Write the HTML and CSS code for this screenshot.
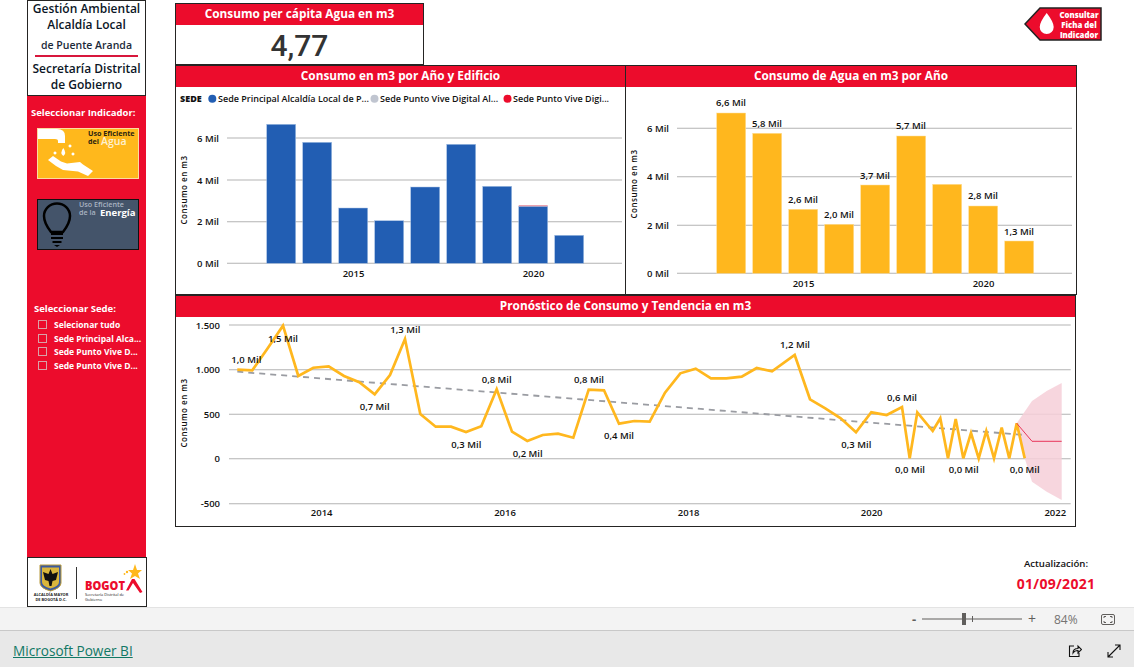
FILE: index.html
```html
<!DOCTYPE html>
<html lang="es">
<head>
<meta charset="utf-8">
<title>Gestión Ambiental</title>
<link rel="stylesheet" href="styles.css">
</head>
<body>
<div class="report">
  <aside class="sidebar">
    <div class="brand">
      <div class="brand-line">Gestión Ambiental</div>
      <div class="brand-line">Alcaldía Local</div>
      <div class="brand-sub">de Puente Aranda</div>
      <div class="brand-rule"></div>
      <div class="brand-line">Secretaría Distrital</div>
      <div class="brand-line">de Gobierno</div>
    </div>
    <div class="side-panel">
      <div class="side-title">Seleccionar Indicador:</div>
      <svg class="tile tile-water" viewBox="0 0 102 51" width="102" height="51">
        <rect x="0.5" y="0.5" width="101" height="50" fill="#ffb81c" stroke="#fbdca0"/>
        <path d="M1 1H20Q28 1 28 8V15H21V13Q21 11 18 11H1Z" fill="#fff"/>
        <path d="M26.300 20Q30 25 26.300 28Q22.500 25 26.300 20ZM18 23.500a1.500 1.500 0 1 0 .01 0M33 16.500a1.500 1.500 0 1 0 .01 0M36 24.500a1.500 1.500 0 1 0 .01 0" fill="#fff"/>
        <path d="M11 32L16 28L24 33.500L30 35.500L43 34L46 36.500L56 43L51 48L41 43.500L26 42L19 38Z" fill="#fff"/>
        <text class="tile-text tile-dark" x="51" y="8">Uso Eficiente</text>
        <text class="tile-text tile-dark" x="51" y="16">del</text>
        <text class="tile-big tile-light" x="64" y="17">Agua</text>
      </svg>
      <svg class="tile tile-energy" viewBox="0 0 102 51" width="102" height="51">
        <rect x="0.5" y="0.5" width="101" height="50" fill="#44546a" stroke="#111"/>
        <path d="M14 33Q7 24 7 17A13 12.500 0 0 1 33 17Q33 24 26 33Z" fill="none" stroke="#000" stroke-width="2.500"/>
        <path d="M14 35H26M14 39H26M15.500 43H24.500" stroke="#000" stroke-width="2.200"/>
        <path d="M17 46H23L20 48Z" fill="#000"/>
        <text class="tile-text tile-grey" x="42" y="8">Uso Eficiente</text>
        <text class="tile-text tile-grey" x="42" y="16">de la</text>
        <text class="tile-big tile-light" x="63" y="17">Energía</text>
      </svg>
      <div class="side-title side-title-sede">Seleccionar Sede:</div>
      <ul class="slicer">
        <li class="slicer-row"><span class="check"></span><span class="slicer-label">Selecionar tudo</span></li>
        <li class="slicer-row"><span class="check"></span><span class="slicer-label">Sede Principal Alca...</span></li>
        <li class="slicer-row"><span class="check"></span><span class="slicer-label">Sede Punto Vive D...</span></li>
        <li class="slicer-row"><span class="check"></span><span class="slicer-label">Sede Punto Vive D...</span></li>
      </ul>
    </div>
    <div class="logo-box">
      <svg viewBox="0 0 118 48" width="118" height="48">
        <path d="M12 7H33V25Q33 30 22.500 33Q12 30 12 25Z" fill="#3b5aa0" stroke="#b89a3a"/>
        <path d="M14 9.500H31V24Q31 28 22.500 30.500Q14 28 14 24Z" fill="#d9b63c"/>
        <path d="M22.500 11L24.500 16L30 14L28 22L24.500 23L23.500 28H21.500L20.500 23L17 22L15 14L20.500 16Z" fill="#111"/>
        <text class="logo-mini" x="23" y="38">ALCALDÍA MAYOR</text>
        <text class="logo-mini" x="23" y="43">DE BOGOTÁ D.C.</text>
        <rect x="48" y="9" width="1" height="32" fill="#333"/>
        <text class="logo-word" x="57" y="32" textLength="40" lengthAdjust="spacingAndGlyphs">BOGOT</text>
        <path d="M98 32.500L104 21H106.500L114.500 34L112 35L105 25L100.500 32.500Z" fill="#ec0c2c"/>
        <path d="M107 6L109 12L114 12L110 15.500L112 21L107 18L102 21L104 15.500L100 12L105 12Z" fill="#ffb81c"/>
        <circle cx="99" cy="14" r="1.200" fill="#ffb81c"/><circle cx="96.500" cy="16" r="0.900" fill="#ffb81c"/>
        <text class="logo-mini logo-left" x="57" y="38">Secretaría Distrital de</text>
        <text class="logo-mini logo-left" x="57" y="43">Gobierno</text>
      </svg>
    </div>
  </aside>

  <main class="main">
    <div class="top-row">
      <section class="kpi">
        <h2 class="head head-kpi">Consumo per cápita Agua en m3</h2>
        <div class="kpi-value">4,77</div>
      </section>
      <svg class="fiche" viewBox="0 0 78 34" width="78" height="34">
        <path d="M1 17L16 1H77V33H16Z" fill="#ec0c2c" stroke="#222" stroke-width="1.500"/>
        <path d="M22.700 6Q29.700 15 29.700 20A7 7 0 0 1 15.700 20Q15.700 15 22.700 6Z" fill="#fff"/>
        <text class="fiche-text" x="55" y="10.500">Consultar</text>
        <text class="fiche-text" x="55" y="20.500">Ficha del</text>
        <text class="fiche-text" x="55" y="30.500">Indicador</text>
      </svg>
    </div>

    <div class="charts">
      <section class="panel">
        <h2 class="head">Consumo en m3 por Año y Edificio</h2>
        <svg class="plot" viewBox="176 87 449 208" width="449" height="208">
          <text class="legend-name" x="180" y="102">SEDE</text>
          <circle cx="212.300" cy="98.700" r="4" fill="#225eb3"/>
          <text class="label legend-left" x="218" y="102">Sede Principal Alcaldía Local de P...</text>
          <circle cx="374.500" cy="98.700" r="4" fill="#c0c5d0"/>
          <text class="label legend-left" x="380" y="102">Sede Punto Vive Digital Al...</text>
          <circle cx="507.500" cy="98.700" r="4" fill="#ec0c2c"/>
          <text class="label legend-left" x="513" y="102">Sede Punto Vive Digi...</text>

          <path class="grid" d="M227 138H622M227 180H622M227 221.700H622M227 263.300H622"/>
          <g class="axis-y">
            <text class="label end" x="219" y="141.500">6 Mil</text>
            <text class="label end" x="219" y="183.500">4 Mil</text>
            <text class="label end" x="219" y="225">2 Mil</text>
            <text class="label end" x="219" y="266.500">0 Mil</text>
          </g>
          <text class="label axis-title" transform="translate(187 190) rotate(-90)">Consumo en m3</text>
          <g class="bars-blue">
            <rect x="266.700" y="124.300" width="29" height="139"/>
            <rect x="302.700" y="142.300" width="29" height="121"/>
            <rect x="338.700" y="208" width="29" height="55.300"/>
            <rect x="374.700" y="220.700" width="29" height="42.600"/>
            <rect x="410.700" y="187" width="29" height="76.300"/>
            <rect x="446.700" y="144.300" width="29" height="119"/>
            <rect x="482.700" y="186.300" width="29" height="77"/>
            <rect x="518.700" y="206.300" width="29" height="57"/>
            <rect x="554.700" y="235.300" width="29" height="28"/>
          </g>
          <rect x="518.700" y="205.200" width="29" height="1.100" fill="#e58c9c"/>
          <text class="label mid" x="353.500" y="276.500">2015</text>
          <text class="label mid" x="533.500" y="276.500">2020</text>
        </svg>
      </section>

      <section class="panel panel-right">
        <h2 class="head">Consumo de Agua en m3 por Año</h2>
        <svg class="plot" viewBox="626 87 449 208" width="449" height="208">
          <path class="grid" d="M677 128.300H1072M677 176.700H1072M677 225.300H1072M677 273.300H1072"/>
          <text class="label end" x="669" y="131.800">6 Mil</text>
          <text class="label end" x="669" y="180.200">4 Mil</text>
          <text class="label end" x="669" y="228.800">2 Mil</text>
          <text class="label end" x="669" y="276.800">0 Mil</text>
          <text class="label axis-title" transform="translate(637 184) rotate(-90)">Consumo en m3</text>
          <g class="bars-yellow">
            <rect x="716.700" y="113" width="29" height="160.300"/>
            <rect x="752.700" y="133.300" width="29" height="140"/>
            <rect x="788.700" y="209.300" width="29" height="64"/>
            <rect x="824.700" y="224.300" width="29" height="49"/>
            <rect x="860.700" y="185" width="29" height="88.300"/>
            <rect x="896.700" y="136" width="29" height="137.300"/>
            <rect x="932.700" y="184.300" width="29" height="89"/>
            <rect x="968.700" y="206" width="29" height="67.300"/>
            <rect x="1004.700" y="241" width="29" height="32.300"/>
          </g>
          <text class="label mid" x="731" y="106">6,6 Mil</text>
          <text class="label mid" x="767" y="127">5,8 Mil</text>
          <text class="label mid" x="803" y="203">2,6 Mil</text>
          <text class="label mid" x="839" y="218">2,0 Mil</text>
          <text class="label mid" x="875" y="178.500">3,7 Mil</text>
          <text class="label mid" x="911" y="129">5,7 Mil</text>
          <text class="label mid" x="983" y="199">2,8 Mil</text>
          <text class="label mid" x="1019" y="235">1,3 Mil</text>
          <text class="label mid" x="803.500" y="286.500">2015</text>
          <text class="label mid" x="983.500" y="286.500">2020</text>
        </svg>
      </section>
    </div>

    <section class="panel panel-wide">
      <h2 class="head">Pronóstico de Consumo y Tendencia en m3</h2>
      <svg class="plot" viewBox="176 317 899 209" width="899" height="209">
        <path class="grid" d="M229 325H1070.700M229 369.700H1070.700M229 414.300H1070.700M229 458.700H1070.700M229 503.700H1070.700"/>
        <text class="label end" x="220" y="328.500">1.500</text>
        <text class="label end" x="220" y="373.200">1.000</text>
        <text class="label end" x="220" y="417.800">500</text>
        <text class="label end" x="220" y="462.200">0</text>
        <text class="label end" x="220" y="507.200">-500</text>
        <text class="label axis-title" transform="translate(187 413) rotate(-90)">Consumo en m3</text>
        <polygon class="band" points="1016.700,423.300 1032,401 1046.700,391 1061.700,383 1061.700,500 1046.700,491.700 1032,481.700 1024.700,458.300"/>
        <polyline class="trend" points="237.300,371.700 1024.700,435"/>
        <polyline class="series" points="237.300,369.700 252.300,370.300 267.700,348.300 283,325.700 298.300,376 313.300,367.700 328.700,366.300 344,376 359.300,382.300 374.700,394.300 390,375 405,339 420.300,414 435.700,426.700 451,426.700 466,432 481.300,426.300 496.700,389.300 512,431.700 527.300,441 542.700,435 558,433.700 573.300,437.700 588.700,389.700 604,390.300 619,423.700 634.300,421 649.700,421.700 665,392.700 680.300,373.300 695.700,368.700 711,378.300 726.300,378.300 741.700,376.700 756.700,368 772,371.300 794.700,355 810,399.300 825.300,408.300 840.700,418.300 856,432.300 871.300,412.300 886.700,415 902,407 909.700,458.300 917.300,412.300 932.700,431 940.300,418.300 948,458.300 955.700,419 963.300,458.300 971,433 978.700,458.300 986.300,431 994,458.300 1001.700,427.700 1009.300,458.300 1016.700,423.300 1024.700,458.300"/>
        <polyline class="forecast" points="1016.700,423.300 1032,441.300 1061.700,441.300"/>
        <text class="label mid" x="246.300" y="362.700">1,0 Mil</text>
        <text class="label mid" x="283" y="342">1,5 Mil</text>
        <text class="label mid" x="405.300" y="332.700">1,3 Mil</text>
        <text class="label mid" x="374.700" y="410">0,7 Mil</text>
        <text class="label mid" x="466.300" y="447.700">0,3 Mil</text>
        <text class="label mid" x="496.700" y="382.700">0,8 Mil</text>
        <text class="label mid" x="527.700" y="456.700">0,2 Mil</text>
        <text class="label mid" x="589" y="382.700">0,8 Mil</text>
        <text class="label mid" x="619" y="438.700">0,4 Mil</text>
        <text class="label mid" x="795" y="347.700">1,2 Mil</text>
        <text class="label mid" x="856.300" y="447.700">0,3 Mil</text>
        <text class="label mid" x="902" y="400.700">0,6 Mil</text>
        <text class="label mid" x="910" y="473.300">0,0 Mil</text>
        <text class="label mid" x="963.700" y="473.300">0,0 Mil</text>
        <text class="label mid" x="1024.700" y="472.700">0,0 Mil</text>
        <text class="label mid" x="321.700" y="515.700">2014</text>
        <text class="label mid" x="505" y="515.700">2016</text>
        <text class="label mid" x="688.700" y="515.700">2018</text>
        <text class="label mid" x="871.700" y="515.700">2020</text>
        <text class="label mid" x="1055.300" y="515.700">2022</text>
      </svg>
    </section>

    <div class="update">
      <div class="update-label">Actualización:</div>
      <div class="update-date">01/09/2021</div>
    </div>
  </main>
</div>

<div class="statusbar">
  <span class="zoom-sign">-</span>
  <svg class="zoom-slider" viewBox="0 0 100 12" width="100" height="12">
    <rect x="0" y="5.500" width="100" height="1" fill="#605e5c"/>
    <rect x="50" y="3" width="1" height="6" fill="#605e5c"/>
    <rect x="40" y="0" width="4" height="12" fill="#605e5c"/>
  </svg>
  <span class="zoom-sign zoom-plus">+</span>
  <span class="zoom-pct">84%</span>
  <svg class="fit" viewBox="0 0 14 11" width="14" height="11">
    <rect x="0.500" y="0.500" width="13" height="10" rx="1.500" fill="none" stroke="#605e5c"/>
    <path d="M3 4V2.500H5M9 2.500H11V4M11 7V8.500H9M5 8.500H3V7" fill="none" stroke="#605e5c"/>
  </svg>
</div>

<footer class="footer">
  <a class="pbi-link" href="#">Microsoft Power BI</a>
  <svg class="foot-icon share" viewBox="0 0 14 14" width="14" height="14">
    <path d="M6 2H1.500V12.500H11V9M5 9Q5 4.500 10 4.500V2L13.500 5.500L10 9V6.500Q6.500 6.500 5 9Z" fill="none" stroke="#111" stroke-width="1.100"/>
  </svg>
  <svg class="foot-icon" viewBox="0 0 14 14" width="14" height="14">
    <path d="M1 13L13 1M8 1H13V6M1 8V13H6" fill="none" stroke="#111" stroke-width="1.100"/>
  </svg>
</footer>
</body>
</html>
```
FILE: styles.css
```css
* { box-sizing: border-box; }
html, body { margin: 0; padding: 0; }
body {
  width: 1134px;
  height: 667px;
  overflow: hidden;
  background: #fff;
  font-family: "Open Sans", "Noto Sans", sans-serif;
  color: #111;
}
.report { display: flex; height: 607px; padding-left: 27px; }

.sidebar { width: 120px; display: flex; flex-direction: column; }
.brand {
  height: 96px;
  width: 119px;
  border: 1px solid #252423;
  text-align: center;
  background: #fff;
}
.brand-line { font-size: 12px; line-height: 16px; font-weight: 600; color: #0b1626; white-space: nowrap; }
.brand-sub { font-size: 10.500px; line-height: 17px; margin-top: 3.500px; font-weight: 600; color: #1b2a3a; }
.brand-rule { height: 2px; margin: 1.500px 7px 4px; background: #d8173c; }

.side-panel {
  flex: 1;
  width: 119px;
  background: #ec0c2c;
  padding-top: 10px;
  display: flex;
  flex-direction: column;
}
.side-title { font-size: 9.500px; line-height: 14px; font-weight: 700; color: #fff; padding-left: 4px; white-space: nowrap; }
.tile { display: block; margin: 8px 0 0 10px; flex: none; }
.tile-energy { margin-top: 20px; }
.tile-text { font-size: 7.200px; font-weight: 700; }
.tile-big { font-size: 9.500px; font-weight: 700; }
.tile-water .tile-big { font-size: 10.500px; font-weight: 600; }
.tile-dark { fill: #2b2410; }
.tile-light { fill: #fff; }
.tile-water .tile-light { fill: #fdf0d0; }
.tile-grey { fill: #a9b3c1; font-weight: 600; }
.side-title-sede { margin-top: 52px; padding-left: 7px; }
.slicer { list-style: none; margin: 2px 0 0; padding: 0 0 0 11px; }
.slicer-row { display: flex; align-items: center; height: 13.500px; }
.check { width: 9px; height: 9px; border: 1px solid #d8a2a8; flex: none; margin-right: 7px; }
.slicer-label { font-size: 8.500px; font-weight: 700; color: #fff; white-space: nowrap; }

.logo-box { height: 50px; border: 1px solid #252423; background: #fff; flex: none; }
.logo-box svg { display: block; }
.logo-mini { font-size: 3.900px; font-weight: 700; fill: #222; text-anchor: middle; }
.logo-left { text-anchor: start; font-weight: 400; }
.logo-word { font-size: 13px; font-weight: 800; fill: #ec0c2c; }

.main { margin-left: 28px; width: 959px; padding-top: 3px; display: flex; flex-direction: column; }
.top-row { display: flex; justify-content: space-between; align-items: flex-start; height: 62px; }
.kpi { width: 249px; height: 62px; border: 1px solid #252423; background: #fff; }
.head {
  margin: 0;
  height: 21px;
  background: #ec0c2c;
  color: #fff;
  font-size: 11.800px;
  line-height: 19px;
  font-weight: 700;
  text-align: center;
  white-space: nowrap;
}
.kpi-value {
  font-family: "Roboto", "Open Sans", sans-serif;
  font-size: 30px;
  font-weight: 500;
  line-height: 42px;
  text-align: center;
  color: #333;
}
.fiche { display: block; margin: 4px 32px 0 0; }
.fiche-text { font-size: 7.800px; font-weight: 800; fill: #fff; text-anchor: middle; }

.charts { display: grid; grid-template-columns: 451px 451px; height: 230px; width: 901px; }
.panel { border: 1px solid #252423; background: #fff; overflow: hidden; }
.panel-right { margin-left: -1px; }
.panel-wide { width: 901px; height: 232px; }
.plot { display: block; }

.grid { stroke: #b4b4b4; stroke-width: 1.100; fill: none; }
.label { font-size: 9.500px; font-weight: 600; fill: #111; }
.end { text-anchor: end; }
.mid { text-anchor: middle; }
.legend-left { text-anchor: start; font-size: 9px; }
.legend-name { font-size: 9px; font-weight: 800; fill: #111; }
.axis-title { font-size: 8px; text-anchor: middle; letter-spacing: .5px; }
.bars-blue rect { fill: #225eb3; stroke: #aac3e6; stroke-width: .5; }
.bars-yellow rect { fill: #ffb71e; stroke: #ffdf9a; stroke-width: .5; }
.series { fill: none; stroke: #ffb71e; stroke-width: 2.700; stroke-linejoin: miter; }
.trend { fill: none; stroke: #9a9ca2; stroke-width: 1.800; stroke-dasharray: 6 5; }
.forecast { fill: none; stroke: #e8365a; stroke-width: 1; }
.band { fill: #f6cfd8; fill-opacity: .85; }

.update { width: 120px; margin: 30px 0 0 821px; text-align: center; }
.update-label { font-size: 9.600px; line-height: 14px; font-weight: 600; color: #111; }
.update-date { font-size: 14px; line-height: 18px; margin-top: 4px; font-weight: 700; color: #ec0c2c; letter-spacing: .3px; }

.statusbar {
  height: 24px;
  background: #f3f3f3;
  border-top: 1px solid #e3e3e3;
  border-bottom: 1px solid #c8c8c8;
  display: flex;
  align-items: center;
  padding-left: 912px;
  color: #605e5c;
}
.zoom-sign { width: 10px; font-size: 13px; font-weight: 700; line-height: 1; }
.zoom-slider { display: block; }
.zoom-plus { margin-left: 6px; font-weight: 400; font-size: 14px; }
.zoom-pct { margin-left: 16px; font-size: 12px; color: #767472; }
.fit { display: block; margin-left: 23px; }

.footer {
  height: 36px;
  background: #e8e8e8;
  display: flex;
  align-items: center;
  padding: 3px 13px 0;
}
.pbi-link { font-size: 13.600px; color: #117865; text-decoration: underline; }
.foot-icon { display: block; margin-left: 25px; }
.share { margin-left: auto; }
```
